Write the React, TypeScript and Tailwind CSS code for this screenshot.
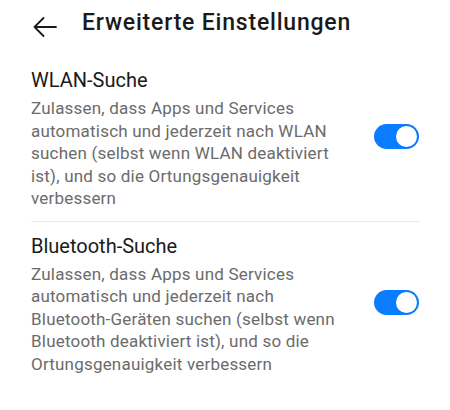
import React from 'react'

const font = { fontFamily: 'Roboto, "Noto Sans", sans-serif' }

function Toggle() {
  return (
    <div className="w-[45px] h-[25px] rounded-full bg-[#0a7cff] flex items-center justify-end pr-[2px] shrink-0 mb-[3px]">
      <div className="w-[21px] h-[21px] rounded-full bg-white" />
    </div>
  )
}

function SettingItem({ title, desc }: { title: string; desc: string }) {
  return (
    <div className="flex items-center">
      <div className="w-[315px] flex flex-col gap-[4px]">
        <div className="text-[20px] leading-[26px] text-[#1a1a1a]">{title}</div>
        <div className="text-[17px] leading-[22.5px] tracking-[0.2px] text-[#6b6b6b]">{desc}</div>
      </div>
      <div className="flex-1" />
      <Toggle />
    </div>
  )
}

export default function App() {
  return (
    <div className="w-[450px] h-[410px] bg-white overflow-hidden" style={font}>
      <div className="flex items-center h-[46px] pt-[8px] pl-[33px]">
        <svg width="24" height="20" viewBox="0 0 24 20" fill="none" stroke="#1a1a1a" strokeWidth="1.8" strokeLinecap="round" strokeLinejoin="round">
          <path d="M23 10H1.5M10.5 1L1.5 10l9 9" />
        </svg>
        <div className="ml-[25px] text-[23px] font-medium leading-[30px] tracking-[0.8px] text-[#1a1a1a] self-start">Erweiterte Einstellungen</div>
      </div>
      <div className="px-[31px] pt-[21px]">
        <SettingItem
          title="WLAN-Suche"
          desc="Zulassen, dass Apps und Services automatisch und jederzeit nach WLAN suchen (selbst wenn WLAN deaktiviert ist), und so die Ortungsgenauigkeit verbessern"
        />
        <div className="h-px bg-[#e8e8e8] mt-[11px] mb-[11px] w-[389px]" />
        <SettingItem
          title="Bluetooth-Suche"
          desc="Zulassen, dass Apps und Services automatisch und jederzeit nach Bluetooth&#8209;Geräten suchen (selbst wenn Bluetooth deaktiviert ist), und so die Ortungsgenauigkeit verbessern"
        />
      </div>
    </div>
  )
}
